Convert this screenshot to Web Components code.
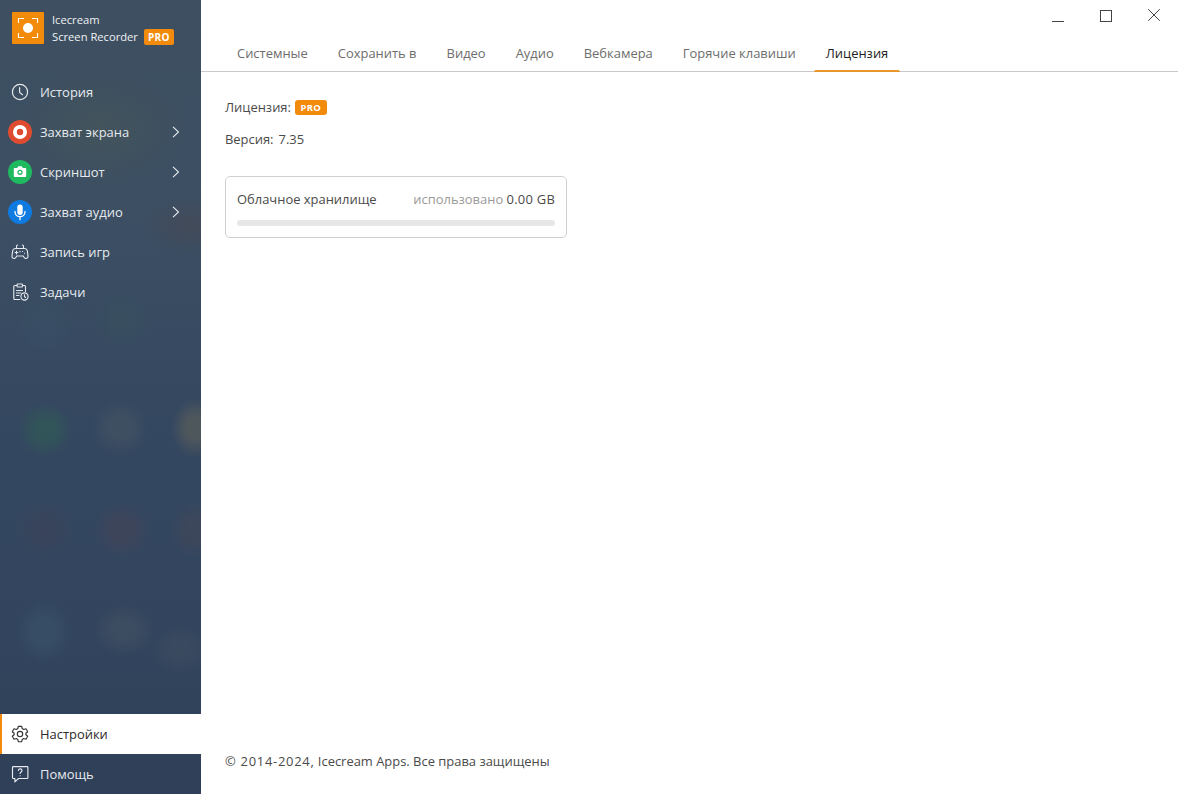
<!DOCTYPE html>
<html lang="ru">
<head>
<meta charset="utf-8">
<title>Icecream Screen Recorder</title>
<style>
  html, body { margin: 0; height: 100%; }
  body { font-family: 'Open Sans', 'Noto Sans', sans-serif; font-size: 12.94px; color: #3c3c3c; background: #fff; overflow: hidden; }
  app-shell { height: 794px; }
</style>
</head>
<body>
<app-shell>
  <side-bar slot="side">
    <brand-logo slot="top"></brand-logo>
    <nav-item slot="top" label="История">
      <svg slot="icon" width="20" height="20" viewBox="0 0 20 20" fill="none" stroke="#e6eaee" stroke-width="1.2" stroke-linecap="round" stroke-linejoin="round"><circle cx="10" cy="10" r="7.6"/><path d="M9.6 5.6v4.8l2.9 2.3"/></svg>
    </nav-item>
    <nav-item slot="top" label="Захват экрана" arrow>
      <svg slot="icon" width="24" height="24" viewBox="0 0 24 24"><circle cx="12" cy="12" r="12" fill="#df4b30"/><circle cx="12" cy="12" r="7" fill="#fff"/><circle cx="12" cy="12" r="3.2" fill="#df4b30"/></svg>
    </nav-item>
    <nav-item slot="top" label="Скриншот" arrow>
      <svg slot="icon" width="24" height="24" viewBox="0 0 24 24"><circle cx="12" cy="12" r="12" fill="#1fb95f"/><path d="M6.6 8h2.6l1-1.7h3.6l1 1.7h2.6c.5 0 .8.3.8.8v7.4c0 .5-.3.8-.8.8H6.6c-.5 0-.8-.3-.8-.8V8.800c0-.5.3-.8.8-.8z" fill="#fff"/><circle cx="12" cy="12.300" r="2.600" fill="#1fb95f"/><circle cx="12" cy="12.300" r="1.300" fill="#fff"/></svg>
    </nav-item>
    <nav-item slot="top" label="Захват аудио" arrow>
      <svg slot="icon" width="24" height="24" viewBox="0 0 24 24"><circle cx="12" cy="12" r="12" fill="#0f7ae0"/><rect x="9.300" y="4.500" width="5.400" height="10.500" rx="2.700" fill="#fff"/><path d="M7 11.500c0 3 2.200 5.200 5 5.200s5-2.200 5-5.200M12 16.700v3" fill="none" stroke="#fff" stroke-width="1.300" stroke-linecap="round"/></svg>
    </nav-item>
    <nav-item slot="top" label="Запись игр">
      <svg slot="icon" width="20" height="20" viewBox="0 0 20 20" fill="none" stroke="#e6eaee" stroke-width="1.100" stroke-linecap="round" stroke-linejoin="round"><path d="M5.200 6.500h9.600c1.400 0 2.200.9 2.500 2.200l.7 5c.2 1.500-.7 2.800-2 2.800-.9 0-1.500-.5-2-1.300l-.7-1.200H6.700L6 15.200c-.5.800-1.100 1.300-2 1.300-1.300 0-2.200-1.300-2-2.800l.7-5c.3-1.300 1.100-2.200 2.500-2.200z"/><path d="M6.500 6.500V4.200c0-.8.500-1.200 1.200-1.200M13.500 6.500V4.200c0-.8-.5-1.200-1.200-1.200M5 10.500h3M6.500 9v3M12.500 9.500h.1M14.500 11.300h.1M9.800 9.600h.4"/></svg>
    </nav-item>
    <nav-item slot="top" label="Задачи">
      <svg slot="icon" width="20" height="20" viewBox="0 0 20 20" fill="none" stroke="#e6eaee" stroke-width="1.100" stroke-linecap="round" stroke-linejoin="round"><path d="M7 3.500H4.800c-.6 0-1 .4-1 1v12c0 .6.400 1 1 1h5M12.500 3.500h2c.6 0 1 .4 1 1v5"/><rect x="7" y="2" width="5.500" height="3" rx=".8"/><path d="M6.500 8.500h6M6.500 11h4.500M6.500 13.500h2.500"/><circle cx="14.500" cy="14.500" r="3.600"/><path d="M14.500 12.800v1.900l1.200.7"/></svg>
    </nav-item>
    <nav-item slot="bottom" label="Настройки" active>
      <svg slot="icon" width="20" height="20" viewBox="0 0 20 20" fill="none" stroke="#333" stroke-width="1.150" stroke-linejoin="round"><path d="M8.300 2.300h3.400l.5 2.300 1.500.9 2.300-.7 1.700 2.900-1.800 1.600v1.400l1.800 1.600-1.700 2.900-2.300-.7-1.500.9-.5 2.300H8.300l-.5-2.300-1.500-.9-2.300.7-1.700-2.900 1.800-1.600V9.300L2.300 7.700 4 4.800l2.300.7 1.500-.9z"/><circle cx="10" cy="10" r="2.700"/></svg>
    </nav-item>
    <nav-item slot="bottom" label="Помощь">
      <svg slot="icon" width="20" height="20" viewBox="0 0 20 20" fill="none" stroke="#e6eaee" stroke-width="1.150" stroke-linecap="round" stroke-linejoin="round"><path d="M3.300 2.600h13.800c.5 0 .8.300.8.800v10.300c0 .5-.3.800-.8.800H8.500l-3.600 3.300v-3.300H3.300c-.5 0-.8-.3-.8-.8V3.400c0-.5.300-.8.800-.8z"/><path d="M8.300 6.400c.2-1 1-1.500 1.900-1.500 1 0 1.800.6 1.800 1.600 0 1.400-1.900 1.500-1.900 3"/><path d="M10.100 11.700h.1"/></svg>
    </nav-item>
  </side-bar>
  <settings-tabs slot="tabs" active="Лицензия" items="Системные|Сохранить в|Видео|Аудио|Вебкамера|Горячие клавиши|Лицензия"></settings-tabs>
  <license-panel slot="main"></license-panel>
</app-shell>

<script>
// Small helper so every element below is just a style block and some markup.
function tpl(html) {
  const t = document.createElement('template');
  t.innerHTML = html;
  return t;
}

const shellTpl = tpl(`
  <style>
    :host { display: flex; width: 1178px; }
    .right { flex: 1; min-width: 0; display: flex; flex-direction: column; }
    .top { height: 32px; display: flex; justify-content: flex-end; }
    .ctl { width: 48px; display: flex; align-items: flex-start; justify-content: center; padding-top: 8px; box-sizing: border-box; }
    .controls { display: flex; }
  </style>
  <slot name="side"></slot>
  <div class="right">
    <div class="top">
      <div class="controls">
        <div class="ctl"><svg width="14" height="14" viewBox="0 0 14 14" fill="none" stroke="#444" stroke-width="1"><path d="M1 13.500h12"/></svg></div>
        <div class="ctl"><svg width="14" height="14" viewBox="0 0 14 14" fill="none" stroke="#444" stroke-width="1"><rect x="1.500" y="2.500" width="11" height="11"/></svg></div>
        <div class="ctl"><svg width="14" height="14" viewBox="0 0 14 14" fill="none" stroke="#444" stroke-width="1"><path d="M1.200 1.200l11.600 11.600M12.800 1.200L1.200 12.800"/></svg></div>
      </div>
    </div>
    <slot name="tabs"></slot>
    <slot name="main"></slot>
  </div>`);
class AppShell extends HTMLElement {
  connectedCallback() {
    this.attachShadow({ mode: 'open' }).appendChild(shellTpl.content.cloneNode(true));
  }
}

// The frosted desktop behind the sidebar: soft blobs over a navy gradient.
const sideTpl = tpl(`
  <style>
    :host {
      display: flex; flex-direction: column; justify-content: space-between;
      width: 201px; height: 794px; flex: none; color: #e6eaee; overflow: hidden;
      background:
        radial-gradient(ellipse 28px 28px at 45px 430px, rgba(44,105,78,.38) 35%, transparent),
        radial-gradient(ellipse 28px 28px at 120px 428px, rgba(95,103,105,.26) 35%, transparent),
        radial-gradient(ellipse 24px 30px at 195px 428px, rgba(125,115,85,.36) 35%, transparent),
        radial-gradient(ellipse 28px 28px at 45px 530px, rgba(80,55,70,.16) 35%, transparent),
        radial-gradient(ellipse 28px 28px at 122px 530px, rgba(100,65,70,.2) 35%, transparent),
        radial-gradient(ellipse 24px 28px at 195px 530px, rgba(100,75,75,.2) 35%, transparent),
        radial-gradient(ellipse 28px 32px at 44px 632px, rgba(65,95,120,.3) 35%, transparent),
        radial-gradient(ellipse 30px 26px at 124px 630px, rgba(90,98,105,.24) 35%, transparent),
        radial-gradient(ellipse 28px 24px at 180px 650px, rgba(85,92,100,.2) 35%, transparent),
        radial-gradient(ellipse 28px 28px at 122px 320px, rgba(60,95,85,.16) 35%, transparent),
        radial-gradient(ellipse 28px 28px at 45px 325px, rgba(60,95,110,.14) 35%, transparent),
        radial-gradient(ellipse 50px 30px at 190px 225px, rgba(85,65,65,.3), transparent),
        radial-gradient(ellipse 90px 60px at 100px 130px, rgba(75,90,85,.45), transparent),
        linear-gradient(180deg, #3d4f60 0%, #3c4f63 25%, #344760 55%, #33455e 80%, #2f3f58 100%);
    }
    .top { display: flex; flex-direction: column; }
    .bottom { display: flex; flex-direction: column; }
  </style>
  <div class="top"><slot name="top"></slot></div>
  <div class="bottom"><slot name="bottom"></slot></div>`);
class SideBar extends HTMLElement {
  connectedCallback() {
    this.attachShadow({ mode: 'open' }).appendChild(sideTpl.content.cloneNode(true));
  }
}

const brandTpl = tpl(`
  <style>
    :host { display: flex; gap: 8px; padding: 12px 12px 0; height: 60px; box-sizing: content-box; font-size: 11.2px; line-height: 17px; color: #f0f2f4; }
    .text { display: flex; flex-direction: column; margin-top: -1px; }
    .row { display: flex; align-items: center; gap: 6px; }
    .pro { background: #f28a0c; color: #fff; font-size: 10px; font-weight: 700; line-height: 16px; height: 16px; padding: 0 4px; border-radius: 2px; letter-spacing: .3px; }
  </style>
  <svg width="32" height="32" viewBox="0 0 32 32"><rect width="32" height="32" rx="1" fill="#f28a0c"/><path d="M6.500 11V6.500H12M20 6.500h5.500V11M25.500 21v4.500H20M12 25.500H6.500V21" fill="none" stroke="#fff" stroke-width="1.100"/><circle cx="16" cy="16" r="5" fill="#fff"/></svg>
  <div class="text">
    <span>Icecream</span>
    <span class="row">Screen Recorder <span class="pro">PRO</span></span>
  </div>`);
class BrandLogo extends HTMLElement {
  connectedCallback() {
    this.attachShadow({ mode: 'open' }).appendChild(brandTpl.content.cloneNode(true));
  }
}

const itemTpl = tpl(`
  <style>
    :host { display: flex; align-items: center; height: 40px; position: relative; color: #e6eaee; }
    :host([active]) { background: #fff; color: #2b2b2b; box-shadow: inset 2px 0 0 #f28a0c; }
    .icon { width: 24px; height: 24px; margin: 0 8px; display: flex; align-items: center; justify-content: center; }
    .arrow { position: absolute; left: 171px; top: 14px; }
  </style>
  <span class="icon"><slot name="icon"></slot></span>
  <span class="label"></span>
  <svg class="arrow" width="10" height="12" viewBox="0 0 10 12" fill="none" stroke="#e6eaee" stroke-width="1.100"><path d="M2 .8L7.500 6 2 11.200"/></svg>`);
class NavItem extends HTMLElement {
  connectedCallback() {
    const root = this.attachShadow({ mode: 'open' });
    root.appendChild(itemTpl.content.cloneNode(true));
    root.querySelector('.label').textContent = this.getAttribute('label');
    if (!this.hasAttribute('arrow')) root.querySelector('.arrow').remove();
  }
}

class SettingsTabs extends HTMLElement {
  connectedCallback() {
    const active = this.getAttribute('active');
    const items = this.getAttribute('items').split('|');
    this.attachShadow({ mode: 'open' }).innerHTML = `
      <style>
        :host { display: flex; gap: 6px; height: 39px; padding-left: 24px; border-bottom: 1px solid #c9c9c9; color: #6d6d6d; }
        .tab { padding: 0 12px; height: 39px; line-height: 42px; box-sizing: border-box; white-space: nowrap; position: relative; }
        .tab.active { color: #222; }
        .tab.active::after { content: ''; position: absolute; left: 0; right: 0; bottom: -1px; height: 2px; background: #e8962a; border-radius: 2px 2px 0 0; }
      </style>
      ${items.map(i => `<div class="tab${i === active ? ' active' : ''}">${i}</div>`).join('')}`;
  }
}

const panelTpl = tpl(`
  <style>
    :host { display: flex; flex-direction: column; height: 722px; box-sizing: border-box; padding: 25px 24px 0; color: #4a4a4a; }
    .line { display: flex; align-items: center; gap: 4px; height: 20px; }
    .line:nth-child(3) { gap: 5px; }
    .line + .line { margin-top: 12px; }
    .pro { background: #f28a0c; color: #fff; font-size: 9.500px; font-weight: 700; height: 15px; line-height: 15px; padding: 0 5.500px; border-radius: 3px; letter-spacing: .3px; }
    .card { width: 342px; height: 62px; box-sizing: border-box; margin-top: 27px; padding: 12px 11px 0; border: 1px solid #cfcfcf; border-radius: 5px; }
    .head { display: flex; justify-content: space-between; height: 20px; line-height: 20px; }
    .used { color: #9a9a9a; }
    .used b { font-weight: 400; color: #4a4a4a; letter-spacing: .25px; }
    .bar { height: 6px; border-radius: 3px; background: #e7e7e7; margin-top: 11px; }
    .foot { margin-top: auto; margin-bottom: 23px; height: 20px; line-height: 20px; }
    .years { letter-spacing: .72px; }
  </style>
  <div class="line">Лицензия: <span class="pro">PRO</span></div>
  <div class="line">Версия: <span>7.35</span></div>
  <div class="card">
    <div class="head"><span>Облачное хранилище</span><span class="used">использовано <b>0.00 GB</b></span></div>
    <div class="bar"></div>
  </div>
  <div class="foot"><span class="years">© 2014-2024,</span> Icecream Apps. Все права защищены</div>`);
class LicensePanel extends HTMLElement {
  connectedCallback() {
    this.attachShadow({ mode: 'open' }).appendChild(panelTpl.content.cloneNode(true));
  }
}

customElements.define('app-shell', AppShell);
customElements.define('side-bar', SideBar);
customElements.define('brand-logo', BrandLogo);
customElements.define('nav-item', NavItem);
customElements.define('settings-tabs', SettingsTabs);
customElements.define('license-panel', LicensePanel);
</script>
</body>
</html>
